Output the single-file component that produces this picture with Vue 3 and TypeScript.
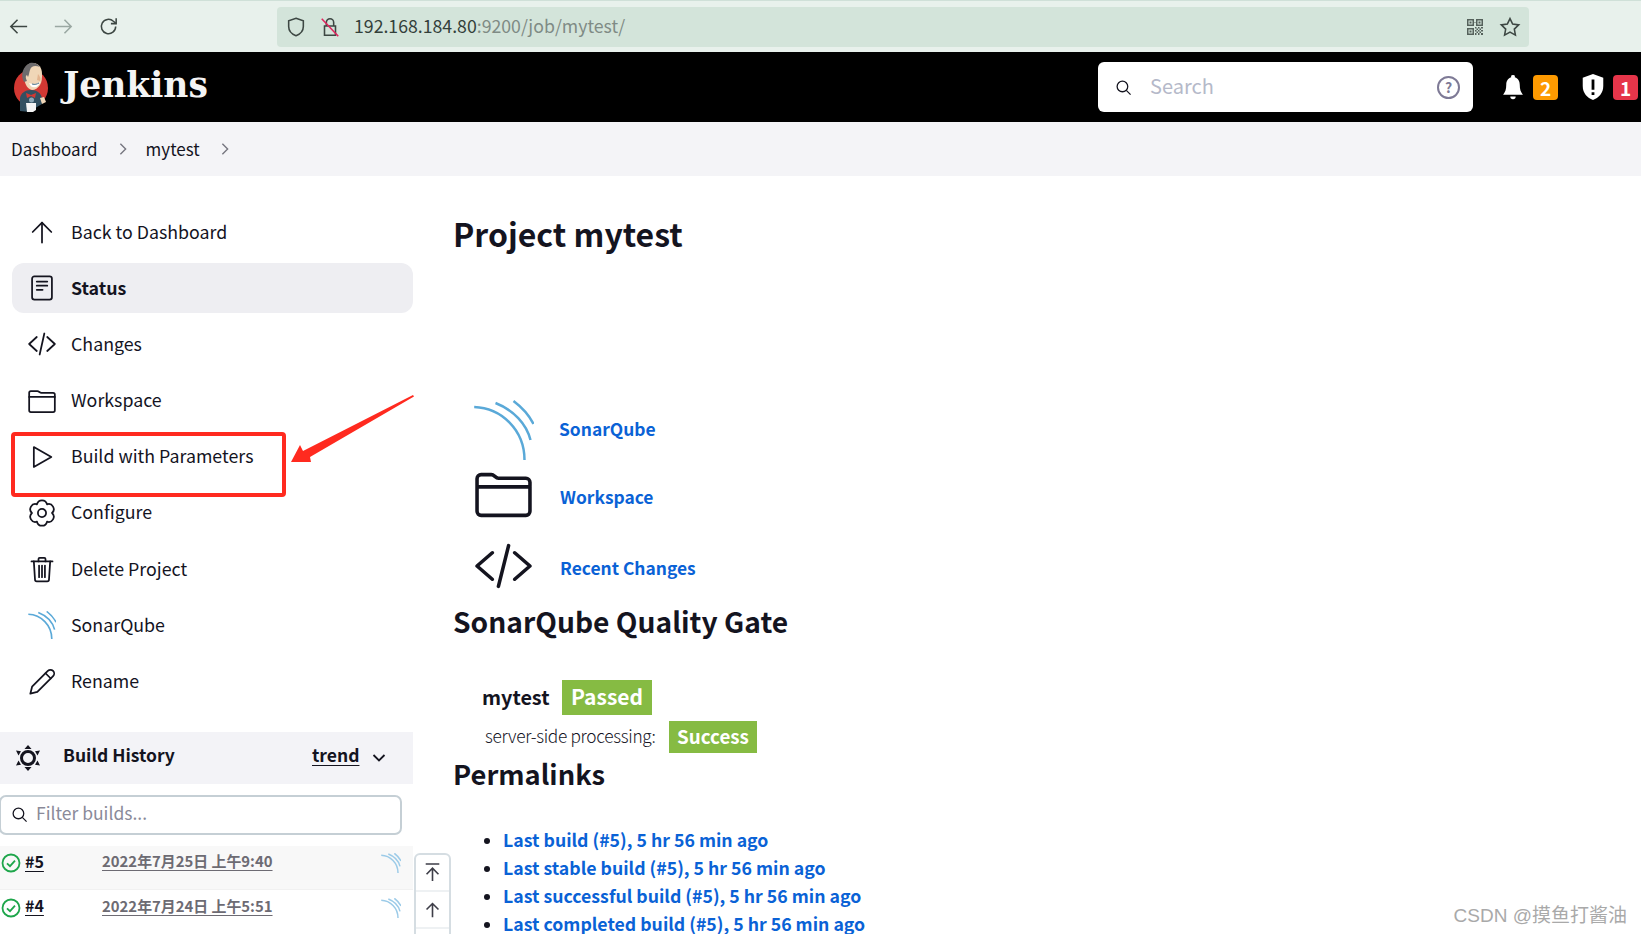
<template>
  <div class="page">
    <!-- browser toolbar -->
    <div class="browser">
      <div class="browser-btns">
        <svg class="tb-icon" viewBox="0 0 24 24"><path d="M21 12H4M11 5l-7 7 7 7" /></svg>
        <svg class="tb-icon faded" viewBox="0 0 24 24"><path d="M3 12h17M13 5l7 7-7 7" /></svg>
        <svg class="tb-icon" viewBox="0 0 24 24"><path d="M19.500 12a7.500 7.500 0 1 1-2.400-5.500L20 9" /><path d="M20 3.500V9h-5.500" /></svg>
      </div>
      <div class="urlbar">
        <svg class="url-icon" viewBox="0 0 24 24"><path d="M12 2.500l8 2.800v6.200c0 5-3.400 8.300-8 10-4.600-1.700-8-5-8-10V5.300z" /></svg>
        <svg class="url-icon lock" viewBox="0 0 24 24"><path d="M8 11V7a4 4 0 0 1 8 0v4M6 11h12v10H6z" /><path class="slash" d="M3 3l18 19" /></svg>
        <span class="url-text">192.168.184.80<span class="url-dim">:9200/job/mytest/</span></span>
        <svg class="qr" viewBox="0 0 18 18">
          <path d="M1 1h7v7H1zM2.500 2.500v4h4v-4zM3.500 3.500h2v2h-2zM10 1h7v7h-7zM11.500 2.500v4h4v-4zM12.500 3.500h2v2h-2zM1 10h7v7H1zM2.500 11.500v4h4v-4zM3.500 12.500h2v2h-2zM8.500 4h1v1h-1zM9 9h1.500v1.500H9zM12 9h1.500v1.500H12zM15 9h2v1.500h-2zM10.500 10.500H12V12h-1.500zM13.500 10.500H15V12h-1.500zM9 12h1.500v1.500H9zM12 12h1.500v1.500H12zM15 12h2v1.500h-2zM10.500 13.500H12V15h-1.500zM13.500 13.500H15V15h-1.500zM9 15h1.500v2H9zM12 15h1.500v2H12zM15 15h2v2h-2z" />
        </svg>
        <svg class="url-icon star" viewBox="0 0 24 24"><path d="M12 2.800l2.900 6 6.600.9-4.800 4.600 1.200 6.500-5.900-3.200-5.900 3.200 1.200-6.500-4.800-4.600 6.600-.9z" /></svg>
      </div>
    </div>

    <!-- jenkins header -->
    <header class="topbar">
      <svg class="butler" viewBox="0 0 36 50">
        <ellipse cx="18" cy="26" rx="17" ry="18" fill="#d33833" />
        <path d="M7 49V36c1-5 5-8 11-8s10 3 11 8v6l-5 3-7 5z" fill="#335061" />
        <path d="M11 15C10 6 14 1 20 1c6 0 9 5 9 11 0 4 0 8-2 11-2 3-5 5-8 5-4-1-7-4-8-13z" fill="#f0d6b7" />
        <path d="M11 20C7 13 10 4 17 1c4-1 8 1 10 4-5-2-9-1-10 3-1 3-1 5-2 7l-1-2c-2 1-1 4 0 6z" fill="#6d6b6d" />
        <path d="M25 12c2 2 3 5 2 7l-3-1z" fill="#e3b48f" />
        <path d="M16 21c4 2 8 1 11-1-1 4-4 6-7 5-2 0-3-2-4-4z" fill="#fff" />
        <path d="M19 22c3 1 5 0 7-1" fill="none" stroke="#49728b" stroke-width="1" />
        <path d="M13 31l5 2 5-2-1 5-4-2-4 2z" fill="#d33833" />
        <circle cx="18.500" cy="38" r="2.500" fill="#8fa9b8" />
        <path d="M13 41h10v7l-3 2h-6z" fill="#f4f4f4" />
        <path d="M27 36l4-1 2 5-4 2z" fill="#f0d6b7" />
      </svg>
      <span class="brand">Jenkins</span>
      <div class="search">
        <svg class="search-icon" viewBox="0 0 24 24"><circle cx="10.500" cy="10.500" r="7.500" /><path d="M16 16l6 6" /></svg>
        <span class="search-ph">Search</span>
        <span class="help">?</span>
      </div>
      <div class="alerts">
        <svg class="alert-icon" viewBox="0 0 24 30"><path d="M12 1a2 2 0 0 1 2 2.500c4 1.200 5.500 4.500 5.500 8.500 0 5 1 8 3.500 11H1c2.500-3 3.500-6 3.500-11 0-4 1.500-7.300 5.500-8.500A2 2 0 0 1 12 1z" /><path d="M9 25h6a3 3 0 0 1-6 0z" /></svg>
        <span class="count orange">2</span>
        <svg class="alert-icon shield" viewBox="0 0 24 30"><path fill-rule="evenodd" d="M12 1l11 4v9c0 8-5 12.500-11 15C6 26.500 1 22 1 14V5zM10.500 7v11h3V7zM10.500 20.500v3h3v-3z" /></svg>
        <span class="count red">1</span>
      </div>
    </header>

    <!-- breadcrumb -->
    <nav class="crumbs">
      <span>Dashboard</span>
      <svg class="chev" viewBox="0 0 10 16"><path d="M2 2l6 6-6 6" /></svg>
      <span>mytest</span>
      <svg class="chev" viewBox="0 0 10 16"><path d="M2 2l6 6-6 6" /></svg>
    </nav>

    <div class="layout">
      <aside class="sidebar">
        <ul class="tasks">
          <li v-for="t in tasks" :key="t.label" class="task" :class="{ active: t.active }">
            <span class="task-icon">
              <svg v-if="t.sonar" class="sonar" viewBox="0 0 60 60">
                <path v-for="d in sonarArcs" :key="d" :d="d" />
              </svg>
              <svg v-else viewBox="0 0 24 24" class="line-icon">
                <path v-for="d in t.paths" :key="d" :d="d" />
              </svg>
            </span>
            <span class="task-label">{{ t.label }}</span>
          </li>
        </ul>

        <div class="history-head">
          <svg class="history-icon" viewBox="0 0 28 28">
            <circle cx="14" cy="14" r="6.500" />
            <path class="solid" d="M14 1l3.500 4h-7zM14 27l-3.500-4h7zM2 6.500l5 .8-2.500 4.200zM26 6.500l-5 .8 2.500 4.200zM2 21.500l5-.8-2.500-4.200zM26 21.500l-5-.8 2.500-4.200z" />
          </svg>
          <span class="history-title">Build History</span>
          <span class="trend">trend</span>
          <svg class="trend-chev" viewBox="0 0 14 10"><path d="M1.500 2l5.500 5.500L12.500 2" /></svg>
        </div>

        <div class="filter">
          <svg class="filter-icon" viewBox="0 0 24 24"><circle cx="10.500" cy="10.500" r="7.500" /><path d="M16 16l6 6" /></svg>
          <span class="filter-ph">Filter builds...</span>
        </div>

        <div
          v-for="(b, i) in builds"
          :key="b.num"
          class="build"
          :class="{ shaded: i === 0 }"
        >
          <svg class="ok" viewBox="0 0 20 20"><circle cx="10" cy="10" r="8.500" /><path d="M6 10.300l3 2.900 5-5.500" /></svg>
          <span class="build-num">{{ b.num }}</span>
          <span class="build-date">{{ b.date }}</span>
          <svg class="sonar small" viewBox="0 0 60 60"><path v-for="d in sonarArcs" :key="d" :d="d" /></svg>
        </div>
      </aside>

      <main class="content">
        <h1 class="title">Project mytest</h1>

        <div class="app-row row-sonar">
          <svg class="sonar big" viewBox="0 0 60 60"><path v-for="d in sonarArcs" :key="d" :d="d" /></svg>
          <a class="link">SonarQube</a>
        </div>
        <div class="app-row row-folder">
          <svg class="big-icon" viewBox="0 0 56 44">
            <path d="M2 38V6a4 4 0 0 1 4-4h10c3 0 4 3.500 7 3.500h27a4 4 0 0 1 4 4V38a4 4 0 0 1-4 4H6a4 4 0 0 1-4-4zM2 14h52" />
          </svg>
          <a class="link">Workspace</a>
        </div>
        <div class="app-row row-code">
          <svg class="big-icon" viewBox="0 0 56 44">
            <path d="M17 9L2 22l15 13M39 9l15 13-15 13M33 2l-10 40" />
          </svg>
          <a class="link">Recent Changes</a>
        </div>

        <h2 class="gate-title">SonarQube Quality Gate</h2>
        <div class="gate-row">
          <span class="gate-name">mytest</span>
          <span class="tag tag-big">Passed</span>
        </div>
        <div class="gate-row second">
          <span class="gate-label">server-side processing:</span>
          <span class="tag">Success</span>
        </div>

        <h2 class="perm-title">Permalinks</h2>
        <ul class="perms">
          <li v-for="p in permalinks" :key="p"><a class="link">{{ p }}</a></li>
        </ul>
      </main>
    </div>

    <!-- annotation drawn over the screenshot -->
    <div class="red-box"></div>
    <svg class="red-arrow" viewBox="0 0 124 68">
      <path d="M1 67L10 50l3 6L123 0l1 1.500L20 62l1 5z" />
    </svg>

    <div class="scroll-tools">
      <div class="scroll-btn">
        <svg viewBox="0 0 20 24"><path d="M2 2h16M10 22V8M3 14l7-7 7 7" /></svg>
      </div>
      <div class="scroll-btn">
        <svg viewBox="0 0 20 24"><path d="M10 21V5M3 12l7-7 7 7" /></svg>
      </div>
    </div>

    <div class="watermark">CSDN @摸鱼打酱油</div>
  </div>
</template>

<script setup lang="ts">
interface Task {
  label: string
  paths?: string[]
  active?: boolean
  sonar?: boolean
}

const sonarArcs = [
  'M0.7 7C28 8 51 30 51 60',
  'M22 3C40 10 53 24 57 40',
  'M40 1C48 7 55 14 60 24'
]

const tasks: Task[] = [
  { label: 'Back to Dashboard', paths: ['M12 21V4', 'M4 12l8-8 8 8'] },
  {
    label: 'Status',
    active: true,
    paths: ['M3.500 4a2 2 0 0 1 2-2h13a2 2 0 0 1 2 2v16a2 2 0 0 1-2 2h-13a2 2 0 0 1-2-2z', 'M7.500 6.500h9', 'M7.500 10h9', 'M7.500 13.500h5']
  },
  { label: 'Changes', paths: ['M7.500 6L1 12l6.500 6', 'M16.500 6l6.500 6-6.500 6', 'M14 3l-4 18'] },
  {
    label: 'Workspace',
    paths: ['M1 18V5a1.500 1.500 0 0 1 1.500-1.500h5.500c1.500 0 2 1.500 3.500 1.500h10a1.500 1.500 0 0 1 1.500 1.500V20a1.500 1.500 0 0 1-1.500 1.500h-19A1.500 1.500 0 0 1 1 20z', 'M1 8.500h22']
  },
  { label: 'Build with Parameters', paths: ['M5 3.500v17L20 12z'] },
  {
    label: 'Configure',
    paths: [
      'M7.700 4.550A4.400 4.400 0 0 1 16.300 4.550 4.400 4.400 0 0 1 20.600 12 4.400 4.400 0 0 1 16.300 19.450 4.400 4.400 0 0 1 7.700 19.450 4.400 4.400 0 0 1 3.400 12 4.400 4.400 0 0 1 7.700 4.550z',
      'M15.500 12a3.500 3.500 0 1 1-7 0 3.500 3.500 0 0 1 7 0z'
    ]
  },
  {
    label: 'Delete Project',
    paths: ['M3 5.500h18', 'M9 5.500V3.500a1 1 0 0 1 1-1h4a1 1 0 0 1 1 1v2', 'M5 5.500l1 15.500a1.500 1.500 0 0 0 1.500 1.500h9a1.500 1.500 0 0 0 1.500-1.500l1-15.500', 'M9.500 9v10', 'M12 9v10', 'M14.500 9v10']
  },
  { label: 'SonarQube', sonar: true },
  {
    label: 'Rename',
    paths: ['M2 22l1.500-6L17 2.500a2.500 2.500 0 0 1 4.500 4.500L8 20.500z', 'M15 4.500l4.500 4.500']
  }
]

const builds = [
  { num: '#5', date: '2022年7月25日 上午9:40' },
  { num: '#4', date: '2022年7月24日 上午5:51' }
]

const permalinks = [
  'Last build (#5), 5 hr 56 min ago',
  'Last stable build (#5), 5 hr 56 min ago',
  'Last successful build (#5), 5 hr 56 min ago',
  'Last completed build (#5), 5 hr 56 min ago'
]
</script>

<style>
html,
body {
  margin: 0;
  background: #fff;
  overflow: hidden;
}
</style>

<style scoped>
.page {
  position: relative;
  width: 1641px;
  height: 934px;
  overflow: hidden;
  background: #fff;
  color: #14141f;
  font-family: "Noto Sans CJK SC", "Noto Sans", sans-serif;
}

/* browser chrome */
.browser {
  height: 52px;
  box-sizing: border-box;
  border-top: 1px solid #cfe0d8;
  background: #e8f1ec;
  display: flex;
  align-items: center;
  padding-right: 112px;
}
.browser-btns {
  width: 277px;
  display: flex;
  gap: 22px;
  padding-left: 7px;
  box-sizing: border-box;
}
.tb-icon {
  width: 23px;
  height: 23px;
  fill: none;
  stroke: #3d4743;
  stroke-width: 1.600;
}
.tb-icon.faded {
  stroke: #9aa8a2;
}
.urlbar {
  flex: 1;
  height: 40px;
  background: #d3e4da;
  border-radius: 4px;
  display: flex;
  align-items: center;
  padding: 0 8px;
}
.url-icon {
  width: 22px;
  height: 22px;
  fill: none;
  stroke: #3d4743;
  stroke-width: 1.700;
  flex: none;
}
.lock {
  margin-left: 12px;
}
.slash {
  stroke: #e0245e;
}
.url-text {
  margin-left: 13px;
  font-size: 17.700px;
  color: #33403a;
  flex: 1;
  padding-bottom: 4px;
}
.url-dim {
  color: #7f8b85;
}
.qr {
  width: 18px;
  height: 18px;
  fill: #55615b;
  fill-rule: evenodd;
  margin-right: 15px;
}

/* header */
.topbar {
  height: 70px;
  background: #000;
  display: flex;
  align-items: center;
  padding-left: 13px;
}
.butler {
  width: 36px;
  height: 50px;
  flex: none;
}
.brand {
  margin-left: 14px;
  color: #f4f4f4;
  font: bold 34.500px "DejaVu Serif", serif;
  width: 1035px;
  flex: none;
  padding-bottom: 4px;
}
.search {
  width: 375px;
  height: 50px;
  background: #fff;
  border-radius: 6px;
  display: flex;
  align-items: center;
  flex: none;
  box-sizing: border-box;
  padding: 0 13px 0 17px;
}
.search-icon,
.filter-icon {
  fill: none;
  stroke: #14141f;
  stroke-width: 1.800;
  flex: none;
}
.search-icon {
  width: 17px;
  height: 17px;
}
.search-ph {
  margin-left: 18px;
  flex: 1;
  font-size: 20px;
  color: #b5b9c9;
  padding-bottom: 3px;
}
.help {
  width: 19px;
  height: 19px;
  border: 2px solid #7e7a96;
  border-radius: 50%;
  display: flex;
  align-items: center;
  justify-content: center;
  font-size: 14px;
  font-weight: 700;
  color: #7e7a96;
}
.alerts {
  display: flex;
  align-items: center;
  margin-left: 29px;
}
.alert-icon {
  width: 22px;
  height: 27px;
  fill: #fff;
}
.alert-icon.shield {
  margin-left: 23px;
  width: 24px;
  height: 28px;
}
.count {
  width: 25px;
  height: 25px;
  margin-left: 8px;
  border-radius: 4px;
  display: flex;
  align-items: center;
  justify-content: center;
  color: #fff;
  font-size: 19px;
  font-weight: 700;
}
.orange {
  background: #fe9a00;
  margin-left: 9px;
}
.red {
  background: #e6354a;
}

/* breadcrumb */
.crumbs {
  height: 54px;
  background: #f4f4f7;
  display: flex;
  align-items: center;
  padding-left: 11px;
  font-size: 17px;
}
.crumbs span {
  padding-bottom: 2px;
}
.chev {
  width: 10px;
  height: 14px;
  margin: 0 18px 0 20px;
  fill: none;
  stroke: #75757f;
  stroke-width: 1.600;
}

/* columns */
.layout {
  display: grid;
  grid-template-columns: 413px 1fr;
}
.sidebar {
  padding-top: 31px;
}
.tasks {
  list-style: none;
  margin: 0;
  padding: 0 0 0 12px;
  display: flex;
  flex-direction: column;
  gap: 6.200px;
}
.task {
  height: 50px;
  display: flex;
  align-items: center;
  border-radius: 12px;
  font-size: 17.800px;
  padding-left: 16px;
  gap: 15px;
}
.task-label {
  padding-bottom: 3px;
}
.task.active {
  background: #eeeef2;
  font-weight: 700;
}
.task-icon {
  width: 28px;
  height: 28px;
  display: flex;
  flex: none;
}
.line-icon {
  width: 28px;
  height: 28px;
  fill: none;
  stroke: #14141f;
  stroke-width: 1.500;
  stroke-linecap: round;
  stroke-linejoin: round;
}
.sonar {
  width: 28px;
  height: 28px;
  fill: none;
  stroke: #5aa9d8;
  stroke-width: 3.500;
  flex: none;
}
.sonar.small {
  width: 20px;
  height: 20px;
  margin-left: auto;
  margin-right: 12px;
  stroke: #9ccbe8;
  stroke-width: 4.500;
}
.sonar.big {
  width: 61px;
  height: 60px;
  stroke-width: 2.500;
}

/* build history */
.history-head {
  height: 52px;
  margin-top: 25px;
  background: #f3f3f7;
  display: flex;
  align-items: center;
  padding-left: 14px;
  font-size: 17.500px;
  font-weight: 700;
}
.history-icon {
  width: 28px;
  height: 28px;
  fill: none;
  stroke: #14141f;
  stroke-width: 3;
  flex: none;
}
.history-icon .solid {
  fill: #14141f;
  stroke: none;
}
.history-title {
  margin-left: 21px;
  width: 249px;
  padding-bottom: 6px;
}
.trend {
  text-decoration: underline;
  text-underline-offset: 3px;
  padding-bottom: 6px;
}
.trend-chev {
  width: 14px;
  height: 10px;
  margin-left: 13px;
  fill: none;
  stroke: #14141f;
  stroke-width: 1.800;
}
.filter {
  height: 40px;
  width: 403px;
  margin: 11px 0 11px -1px;
  box-sizing: border-box;
  border: 2px solid #c5cfd5;
  border-radius: 7px;
  display: flex;
  align-items: center;
  padding-left: 10px;
  background: #fff;
}
.filter-icon {
  width: 17px;
  height: 17px;
}
.filter-ph {
  margin-left: 8px;
  font-size: 17.500px;
  color: #8a8a99;
  padding-bottom: 4px;
}
.build {
  height: 44px;
  box-sizing: border-box;
  display: flex;
  align-items: center;
  padding: 0 0 8px 1px;
}
.build.shaded {
  background: #f8f8f8;
  border-bottom: 1px solid #f1f1f1;
}
.ok {
  width: 20px;
  height: 20px;
  fill: none;
  stroke: #1ea64b;
  stroke-width: 1.800;
  flex: none;
}
.build-num {
  width: 77px;
  margin-left: 4px;
  font-size: 16px;
  font-weight: 700;
  text-decoration: underline;
  text-underline-offset: 3px;
  padding-bottom: 5px;
}
.build-date {
  font-size: 14.900px;
  font-weight: 700;
  color: #6d6b73;
  text-decoration: underline;
  text-underline-offset: 3px;
  padding-bottom: 5px;
}

/* main */
.content {
  padding: 37px 0 0 40px;
}
.title {
  margin: 0 0 147px;
  font-size: 32px;
  line-height: 40px;
  font-weight: 700;
}
.app-row {
  display: flex;
  align-items: center;
  padding-left: 20px;
}
.link {
  color: #0a62d6;
  font-weight: 700;
  font-size: 17.700px;
}
.app-row .link {
  margin-left: 25px;
  font-size: 17.400px;
}
.row-sonar {
  height: 60px;
}
.row-sonar .link {
  padding-bottom: 3px;
}
.row-folder {
  height: 56px;
  margin-top: 7px;
}
.row-folder .link {
  padding-top: 2px;
  margin-left: 26px;
}
.row-code {
  height: 56px;
  margin-top: 15px;
}
.row-code .link {
  padding-top: 3px;
  margin-left: 26px;
}
.big-icon {
  width: 61px;
  height: 46px;
  padding: 0 2px;
  box-sizing: border-box;
  fill: none;
  stroke: #14141f;
  stroke-width: 3.500;
  stroke-linecap: round;
  stroke-linejoin: round;
  flex: none;
}
.gate-title {
  margin: 9px 0 0;
  font-size: 28.200px;
  line-height: 36px;
  font-weight: 700;
}
.gate-row {
  display: flex;
  align-items: center;
  margin-top: 41px;
  padding-left: 29px;
}
.gate-row.second {
  margin-top: 6px;
  padding-left: 32px;
}
.gate-name {
  font-size: 19.800px;
  font-weight: 700;
  width: 80px;
  padding-bottom: 3px;
}
.gate-label {
  font-size: 17.300px;
  font-weight: 300;
  letter-spacing: -0.300px;
  width: 184px;
  white-space: nowrap;
  padding-bottom: 3px;
}
.tag {
  background: #86bb43;
  color: #fff;
  font-weight: 700;
  font-size: 18.800px;
  height: 32px;
  line-height: 30px;
  padding: 0 8px;
  width: 72px;
  text-align: center;
}
.tag-big {
  font-size: 21px;
  height: 35px;
  line-height: 33px;
  width: 74px;
}
.perm-title {
  margin: 2px 0 0;
  font-size: 27.300px;
  line-height: 36px;
  font-weight: 700;
}
.perms {
  margin: 35px 0 0;
  padding-left: 50px;
  list-style: disc;
}
.perms li {
  height: 28px;
  line-height: 27px;
}

/* overlays */
.red-box {
  position: absolute;
  left: 11px;
  top: 432px;
  width: 275px;
  height: 65px;
  box-sizing: border-box;
  border: 4px solid #ff2a1f;
  border-radius: 4px;
}
.red-arrow {
  position: absolute;
  left: 290px;
  top: 395px;
  width: 124px;
  height: 68px;
  fill: #ff2a1f;
}
.scroll-tools {
  position: absolute;
  left: 414px;
  top: 853px;
  width: 37px;
  height: 100px;
  box-sizing: border-box;
  border: 2px solid #d5dde2;
  border-radius: 6px 6px 0 0;
  background: #fff;
}
.scroll-btn {
  height: 35px;
  border-bottom: 2px solid #eef1f3;
  display: flex;
  align-items: center;
  justify-content: center;
}
.scroll-btn svg {
  width: 17px;
  height: 21px;
  fill: none;
  stroke: #3e3e48;
  stroke-width: 1.900;
}
.watermark {
  position: absolute;
  right: 14px;
  bottom: 7px;
  color: #a9a9a9;
  font-size: 19px;
  font-family: "Liberation Sans", "Noto Sans CJK SC", sans-serif;
}
</style>
